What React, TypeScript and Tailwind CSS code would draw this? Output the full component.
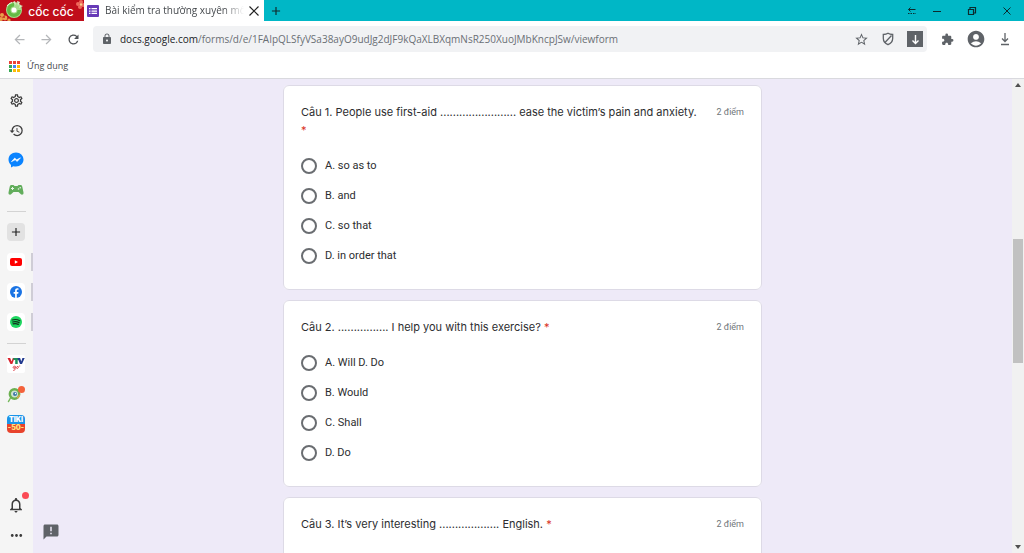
import { ReactNode } from 'react';
import {
  MdAccountCircle,
  MdAdd,
  MdAnnouncement,
  MdArrowBack,
  MdArrowForward,
  MdExtension,
  MdHistory,
  MdLock,
  MdMoreHoriz,
  MdNotificationsNone,
  MdOutlineSettings,
  MdRefresh,
  MdStarBorder,
} from 'react-icons/md';

interface Question {
  id: string;
  title: string;
  points: string;
  options: string[];
}

const questions: Question[] = [
  {
    id: 'q1',
    title: 'Câu 1. People use first-aid ........................ ease the victim’s pain and anxiety.',
    points: '2 điểm',
    options: ['A. so as to', 'B. and', 'C. so that', 'D. in order that'],
  },
  {
    id: 'q2',
    title: 'Câu 2. ................ I help you with this exercise?',
    points: '2 điểm',
    options: ['A. Will D. Do', 'B. Would', 'C. Shall', 'D. Do'],
  },
  {
    id: 'q3',
    title: 'Câu 3. It’s very interesting ................... English.',
    points: '2 điểm',
    options: [],
  },
];

const appDots = [
  '#ea4335', '#ea4335', '#ea4335',
  '#34a853', '#4285f4', '#fbbc05',
  '#34a853', '#fbbc05', '#fbbc05',
];

function CocCocMark() {
  return (
    <svg viewBox="0 0 26 21" className="h-[21px] w-[26px] shrink-0" aria-hidden="true">
      <g fill="#e9a24a">
        <circle cx="2" cy="15" r="2" />
        <circle cx="5" cy="18" r="2.4" />
        <circle cx="1" cy="19" r="2" />
        <circle cx="9" cy="20" r="1.6" />
      </g>
      <circle cx="4" cy="17" r="1" fill="#c2261e" />
      <circle cx="14" cy="10" r="8" fill="#a6dc8c" />
      <path d="M14 3a7 7 0 1 0 7 7h-3.500a3.500 3.500 0 1 1-3.500-3.500z" fill="#63bb46" />
      <path d="M13 2l2-1 1 4zM17 1l3 1-2 4zM20 5l3 1-4 2z" fill="#d9f0c4" />
      <path d="M7 6a8 8 0 0 1 5-3.500" stroke="#e8f7dd" fill="none" />
      <circle cx="14" cy="10" r="2.500" fill="#fff" />
    </svg>
  );
}

function Blossom() {
  return (
    <svg viewBox="0 0 8 10" className="h-[10px] w-[8px] shrink-0 self-start" aria-hidden="true">
      <g fill="#ef6a5c">
        <circle cx="5" cy="2" r="2" />
        <circle cx="2" cy="4" r="2" />
        <circle cx="7" cy="5" r="2" />
        <circle cx="4" cy="7" r="2" />
      </g>
      <circle cx="5" cy="4.500" r="1.200" fill="#fbd08a" />
    </svg>
  );
}

function FormsIcon() {
  return (
    <svg viewBox="0 0 12 12" className="size-3 shrink-0" aria-hidden="true">
      <rect width="12" height="12" rx="1" fill="#673ab7" />
      <g fill="#fff">
        <path d="M2 3h1.500v1.300H2zM2 5.400h1.500v1.300H2zM2 7.800h1.500v1.300H2z" />
        <path d="M4.500 3H10v1.300H4.500zM4.500 5.400H10v1.300H4.500zM4.500 7.800H10v1.300H4.500z" />
      </g>
    </svg>
  );
}

function MessengerIcon() {
  return (
    <svg viewBox="0 0 16 16" className="size-4" aria-hidden="true">
      <path d="M8 .5C3.700.5.500 3.600.500 7.600c0 2.200.9 4 2.500 5.300v2.600l2.400-1.300c.8.200 1.700.4 2.600.4 4.300 0 7.500-3.100 7.500-7S12.300.5 8 .5z" fill="#0a84ff" />
      <path d="M3.400 9.700l3.300-3.600 2 1.700 3.800-2-3.300 3.700-2-1.700z" fill="#fff" stroke="#fff" strokeWidth=".6" strokeLinejoin="round" />
    </svg>
  );
}

function GamepadIcon() {
  return (
    <svg viewBox="0 0 16 12" className="h-3 w-4" aria-hidden="true">
      <path d="M3.500 1h2l1 1h3l1-1h2c1 0 1.500.7 1.800 1.700l1.200 5.800c.3 1.800-1.400 3-2.600 1.800L10.500 8h-5l-2.400 2.300C1.900 11.500.2 10.300.5 8.500l1.200-5.800C2 1.700 2.500 1 3.500 1z" fill="#62ad5c" />
      <path d="M4.500 3v3M3 4.500h3" stroke="#e8f5e6" strokeWidth="1" />
      <circle cx="10.500" cy="5" r=".8" fill="#e8f5e6" />
      <circle cx="12.200" cy="3.700" r=".8" fill="#e8f5e6" />
    </svg>
  );
}

function YoutubeIcon() {
  return (
    <svg viewBox="0 0 12 10" className="h-[10px] w-3" aria-hidden="true">
      <rect y="1" width="12" height="8" rx="2" fill="#f00" />
      <path d="M4.800 3.200v3.600L8 5z" fill="#fff" />
    </svg>
  );
}

function FacebookIcon() {
  return (
    <svg viewBox="0 0 12 12" className="size-3" aria-hidden="true">
      <circle cx="6" cy="6" r="6" fill="#1b74e4" />
      <path d="M5.100 12V7.700H3.600V6h1.500V4.700c0-1.600.9-2.400 2.300-2.400.6 0 1.100.1 1.100.1v1.400h-.7c-.8 0-1 .5-1 1V6h1.700l-.3 1.700H6.800V12z" fill="#fff" />
    </svg>
  );
}

function SpotifyIcon() {
  return (
    <svg viewBox="0 0 12 12" className="size-3" aria-hidden="true">
      <circle cx="6" cy="6" r="6" fill="#1ed760" />
      <path d="M2.200 4c2.600-.8 5.400-.5 7.600.7M2.700 6c2.200-.6 4.500-.4 6.400.6M3.100 7.900c1.900-.5 3.700-.3 5.200.5" fill="none" stroke="#12311c" strokeWidth="1.200" strokeLinecap="round" />
    </svg>
  );
}

function VtvIcon() {
  return (
    <svg viewBox="0 0 18 18" className="size-[18px]" aria-hidden="true">
      <rect width="18" height="18" rx="2" fill="#fff" />
      <path d="M.5 3h2.700l1.300 3.500L5.800 3h1.700L5.300 9H3.500z" fill="#d9232e" />
      <path d="M6.300 3h6.200v2h-1.800v4H8.200V5H6.300z" fill="#1f8f5b" />
      <path d="M10.500 3h2.600l1.200 3.500L15.400 3h2.300l-2.700 6h-2z" fill="#223a8f" />
      <path d="M8.300 11.500c-1-.7-2.200 0-2.200.9 0 1 1.400 1.200 2 .2l.2-1-.4 3c-.3 1-1.500 1-1.800.5M11 11.400c-1.700-.2-2 2.100-.8 2.100s1.600-1.900.8-2.100zM12.700 10.500v1" fill="none" stroke="#d9232e" strokeWidth=".8" />
    </svg>
  );
}

function SearchGameIcon() {
  return (
    <svg viewBox="0 0 18 18" className="size-[18px]" aria-hidden="true">
      <path d="M4 12l-2.500 4.500" stroke="#74b85a" strokeWidth="1.500" strokeLinecap="round" />
      <circle cx="7.500" cy="9" r="4.700" fill="#cfe3d0" stroke="#6bb04f" strokeWidth="2.400" />
      <circle cx="8" cy="9" r="2" fill="#3e78a8" />
      <circle cx="8.500" cy="8.500" r=".7" fill="#fff" />
      <path d="M10 13c1.500-.6 2.400-1.800 2.600-3.300" stroke="#e0a44c" strokeWidth="1.500" fill="none" />
      <circle cx="14.500" cy="4.500" r="3.500" fill="#f4623a" />
    </svg>
  );
}

function TikiIcon() {
  return (
    <span className="flex h-[18px] w-[18px] flex-col items-center justify-center overflow-hidden rounded-sm bg-linear-to-b from-[#1a94e8] from-50% to-[#e8432c] to-50% font-['Inter',sans-serif] text-[7px] leading-[8px] font-black text-white">
      <span>TIKI</span>
      <span className="text-[#ffe27a]">-50-</span>
    </span>
  );
}

function SideButton({ label, open, children }: { label: string; open?: boolean; children: ReactNode }) {
  return (
    <button aria-label={label} className="relative flex h-[30px] w-full shrink-0 items-center justify-center pr-px text-[#3c3c3c]">
      {children}
      {open && <span className="absolute top-[6px] right-0 h-[18px] w-[2px] bg-[#cfcdd6]" />}
    </button>
  );
}

function SideDivider() {
  return (
    <div className="flex h-3 shrink-0 items-center px-[7px]">
      <hr className="w-full border-[#d3d3d3]" />
    </div>
  );
}

function Tile({ children }: { children: ReactNode }) {
  return <span className="flex size-[18px] items-center justify-center rounded-sm bg-white">{children}</span>;
}

function Sidebar() {
  return (
    <nav className="flex w-[33px] shrink-0 flex-col bg-[#f5f5f5] pt-[6px] pb-[3px]">
      <SideButton label="Cài đặt"><MdOutlineSettings size={15} /></SideButton>
      <SideButton label="Lịch sử"><MdHistory size={15} /></SideButton>
      <SideButton label="Messenger"><MessengerIcon /></SideButton>
      <SideButton label="Trò chơi"><GamepadIcon /></SideButton>
      <SideDivider />
      <SideButton label="Thêm">
        <span className="flex size-[18px] items-center justify-center rounded-sm bg-[#e2e2e2] text-[#222]">
          <MdAdd size={14} />
        </span>
      </SideButton>
      <SideButton label="YouTube" open><Tile><YoutubeIcon /></Tile></SideButton>
      <SideButton label="Facebook" open><Tile><FacebookIcon /></Tile></SideButton>
      <SideButton label="Spotify" open><Tile><SpotifyIcon /></Tile></SideButton>
      <SideDivider />
      <SideButton label="VTV Go"><VtvIcon /></SideButton>
      <SideButton label="Cốc Cốc"><SearchGameIcon /></SideButton>
      <SideButton label="Tiki"><TikiIcon /></SideButton>
      <div className="flex-1" />
      <SideButton label="Thông báo">
        <MdNotificationsNone size={18} />
        <span className="absolute top-[2px] right-1 size-[7px] rounded-full bg-[#fb4b55]" />
      </SideButton>
      <SideButton label="Thêm tùy chọn"><MdMoreHoriz size={17} /></SideButton>
    </nav>
  );
}

function TabBar() {
  return (
    <header className="flex h-[21px] shrink-0 bg-[#00b7c6]">
      <div className="flex w-[84px] shrink-0 items-center bg-[#c00d1a]">
        <CocCocMark />
        <span className="flex-1 pt-[3px] text-center font-['Inter',sans-serif] text-[12px] leading-[18px] font-medium whitespace-nowrap text-white">cốc cốc</span>
        <Blossom />
      </div>
      <div className="flex w-[180px] shrink-0 items-center bg-white pr-1 pl-[3px]">
        <FormsIcon />
        <span className="ml-[6px] flex-1 overflow-hidden mask-r-from-85% font-['Open_Sans',sans-serif] text-[10px] leading-[21px] whitespace-nowrap text-[#45494d]">
          Bài kiểm tra thường xuyên mô
        </span>
        <button aria-label="Đóng thẻ" className="ml-1 text-[#222]">
          <svg viewBox="0 0 12 12" className="size-3" stroke="currentColor" strokeWidth="1.200"><path d="M1.500 1.500l9 9M10.500 1.500l-9 9" /></svg>
        </button>
      </div>
      <button aria-label="Thẻ mới" className="ml-[5px] text-[#10292c]"><MdAdd size={14} /></button>
      <div className="flex-1" />
      <div className="flex items-center gap-[15px] pr-3 text-[#0c2b2e]">
        <button aria-label="Thu gọn">
          <svg viewBox="0 0 10 10" className="size-[10px]" fill="none" stroke="currentColor">
            <path d="M1.500 3.500h7M3.500 1.500l-2 2 2 2" />
            <path d="M1 7.500h8" strokeDasharray="1.500 1" />
          </svg>
        </button>
        <button aria-label="Thu nhỏ">
          <svg viewBox="0 0 10 10" className="size-[10px]" stroke="currentColor"><path d="M1 5.500h8" /></svg>
        </button>
        <button aria-label="Khôi phục" className="ml-[10px]">
          <svg viewBox="0 0 10 10" className="size-[10px]" fill="none" stroke="currentColor" strokeWidth="1.200">
            <path d="M1.500 3.500h5v5h-5zM3 3.500v-2h5.500V7h-2" />
          </svg>
        </button>
        <button aria-label="Đóng" className="ml-[10px]">
          <svg viewBox="0 0 10 10" className="size-[10px]" stroke="currentColor"><path d="M1.500 1.500l7 7M8.500 1.500l-7 7" /></svg>
        </button>
      </div>
    </header>
  );
}

function Toolbar() {
  return (
    <div className="flex h-9 shrink-0 items-center bg-white pr-3 pl-3 text-[#5f6368]">
      <button aria-label="Quay lại" className="text-[#b4b6b9]"><MdArrowBack size={15} /></button>
      <button aria-label="Tiến" className="ml-3 text-[#b4b6b9]"><MdArrowForward size={15} /></button>
      <button aria-label="Tải lại" className="ml-3 text-[#505357]"><MdRefresh size={15} /></button>
      <div className="ml-3 flex h-[26px] min-w-0 flex-1 items-center rounded-sm bg-[#f1f2f4] pr-1 pl-2">
        <MdLock size={12} className="shrink-0" />
        <p className="ml-[7px] flex-1 overflow-hidden font-['Open_Sans',sans-serif] text-[10px] leading-4 whitespace-nowrap text-[#6a6f74]">
          <span className="text-[#202124]">docs.google.com</span>
          /forms/d/e/1FAIpQLSfyVSa38ayO9udJg2dJF9kQaXLBXqmNsR250XuoJMbKncpJSw/viewform
        </p>
        <button aria-label="Đánh dấu trang"><MdStarBorder size={15} /></button>
        <button aria-label="Chặn quảng cáo" className="ml-3">
          <svg viewBox="0 0 14 14" className="size-[14px]" fill="none" stroke="currentColor" strokeWidth="1.300">
            <path d="M7 1.300c1.500 1 3 1.200 4.700 1.200v3.700c0 3.200-2 5.300-4.700 6.500C4.300 11.500 2.300 9.400 2.300 6.200V2.500C4 2.500 5.500 2.300 7 1.300z" />
            <path d="M10.500 3.500l-6.500 7" />
          </svg>
        </button>
        <button aria-label="Tải video" className="ml-3 flex size-4 items-center justify-center bg-[#5f6368] text-white">
          <svg viewBox="0 0 11 11" className="size-[11px]" fill="none" stroke="currentColor" strokeWidth="1.400">
            <path d="M5.500 1v8.500M2.500 6.500l3 3 3-3" />
          </svg>
        </button>
      </div>
      <button aria-label="Tiện ích" className="ml-[14px]"><MdExtension size={13} /></button>
      <button aria-label="Tài khoản" className="ml-3"><MdAccountCircle size={20} /></button>
      <button aria-label="Tải xuống" className="ml-3">
        <svg viewBox="0 0 14 14" className="size-[14px]" fill="none" stroke="currentColor" strokeWidth="1.300">
          <path d="M7 1v8.500M4 6.500l3 3 3-3M3 12.500h8" />
        </svg>
      </button>
    </div>
  );
}

function QuestionCard({ question }: { question: Question }) {
  return (
    <fieldset className="w-full rounded-md border border-[#dddae6] bg-white px-[17px] pt-[17px] pb-[18px]">
      <div className="flex items-start justify-between gap-4">
        <p id={question.id} className="font-['Inter',sans-serif] text-[11px] leading-[18px] text-[#2c2d30]">
          {question.title} <span className="text-[#d93025]">*</span>
        </p>
        <span className="shrink-0 font-['Roboto',sans-serif] text-[9px] leading-[18px] text-[#70757a]">{question.points}</span>
      </div>
      <div role="radiogroup" aria-labelledby={question.id} className="mt-3">
        {question.options.map((option) => (
          <label key={option} className="flex h-[30px] items-center gap-2 font-['Roboto',sans-serif] text-[11px] leading-4 text-[#2c2d30]">
            <input
              type="radio"
              name={question.id}
              className="size-4 shrink-0 appearance-none rounded-full border-2 border-[#6a6d71] checked:border-[5px] checked:border-[#673ab7]"
            />
            {option}
          </label>
        ))}
      </div>
    </fieldset>
  );
}

function Scrollbar() {
  return (
    <div className="flex w-3 shrink-0 flex-col items-center bg-[#f1f1f1] py-1" aria-hidden="true">
      <svg viewBox="0 0 6 4" className="h-1 w-[6px]"><path d="M0 4l3-4 3 4z" fill="#505050" /></svg>
      <div className="flex w-full flex-1 flex-col items-center">
        <div className="grow-[152]" />
        <div className="w-[10px] grow-[124] bg-[#c1c1c1]" />
        <div className="grow-[182]" />
      </div>
      <svg viewBox="0 0 6 4" className="h-1 w-[6px]"><path d="M0 0l3 4 3-4z" fill="#505050" /></svg>
    </div>
  );
}

export default function App() {
  return (
    <div className="flex h-screen flex-col overflow-hidden bg-white">
      <TabBar />
      <Toolbar />
      <div className="flex h-[22px] shrink-0 items-center border-b border-[#d9d9de] pb-[3px] pl-[9px]">
        <button className="flex items-center gap-[7px] font-['Open_Sans',sans-serif] text-[9px] leading-4 text-[#45494d]">
          <span className="grid grid-cols-3 gap-px">
            {appDots.map((color, i) => (
              <span key={i} className="size-[3px]" style={{ backgroundColor: color }} />
            ))}
          </span>
          Ứng dụng
        </button>
      </div>

      <div className="flex min-h-0 flex-1">
        <Sidebar />
        <main className="relative flex-1 overflow-hidden bg-[#eeeaf8]">
          <div className="mx-auto flex max-w-[479px] flex-col gap-[10px] pt-[6px]">
            {questions.map((question) => (
              <QuestionCard key={question.id} question={question} />
            ))}
          </div>
          <button aria-label="Báo cáo sự cố" className="absolute bottom-3 left-[9px] text-[#5f6368]">
            <MdAnnouncement size={18} />
          </button>
        </main>
        <Scrollbar />
      </div>
    </div>
  );
}
